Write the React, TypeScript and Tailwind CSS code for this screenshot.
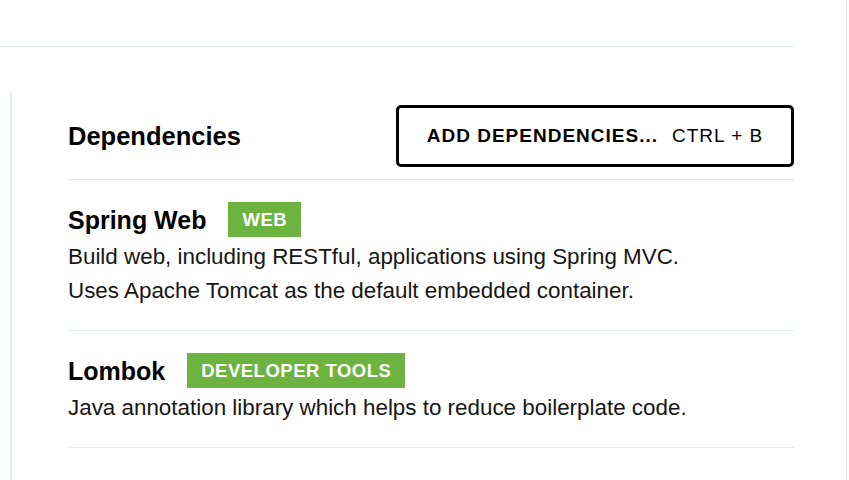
const deps = [
  {
    name: 'Spring Web',
    tag: 'WEB',
    lines: [
      'Build web, including RESTful, applications using Spring MVC.',
      'Uses Apache Tomcat as the default embedded container.',
    ],
  },
  {
    name: 'Lombok',
    tag: 'DEVELOPER TOOLS',
    lines: ['Java annotation library which helps to reduce boilerplate code.'],
  },
];

export default function App() {
  return (
    <div
      className="flex h-[480px] w-[849px] overflow-hidden bg-white text-black"
      style={{ fontFamily: '"Liberation Sans", Arial, sans-serif' }}
    >
      <div className="w-[846px] shrink-0">
        <div className="h-[47px] w-[794px] border-b border-[#e1e9e9]" />
        <div className="ml-[10px] mt-[45px] h-[400px] w-[784px] border-l-2 border-[#e8eeee] pl-[56px] pt-[13px]">
          <div className="flex items-center justify-between border-b border-[#e1e9e9] pb-[12px]">
            <h2 className="text-[25.5px] font-bold leading-[28px]">Dependencies</h2>
            <button className="flex h-[62px] w-[398px] items-center justify-center rounded-[5px] border-[3px] border-black text-[19px] tracking-[1px]">
              <span className="font-bold">ADD DEPENDENCIES...</span>
              <span className="ml-[14px]">CTRL + B</span>
            </button>
          </div>
          {deps.map((d) => (
            <div key={d.name} className="border-b border-[#e1e9e9] pb-[22px] pt-[22px]">
              <div className="flex h-[35px] items-center">
                <span className="text-[25px] font-bold leading-[28px]">{d.name}</span>
                <span className="ml-[22px] flex h-[35px] items-center bg-[#6db33f] px-[14px] text-[18.5px] font-bold tracking-[0.5px] text-white">
                  {d.tag}
                </span>
              </div>
              <div className="mt-[3px]">
                {d.lines.map((l) => (
                  <p key={l} className="text-[22.4px] leading-[34px] text-[#161616]">
                    {l}
                  </p>
                ))}
              </div>
            </div>
          ))}
        </div>
      </div>
      <div className="h-full flex-1 border-l border-[#e4eaea] bg-[#fbfbfb]" />
    </div>
  );
}
